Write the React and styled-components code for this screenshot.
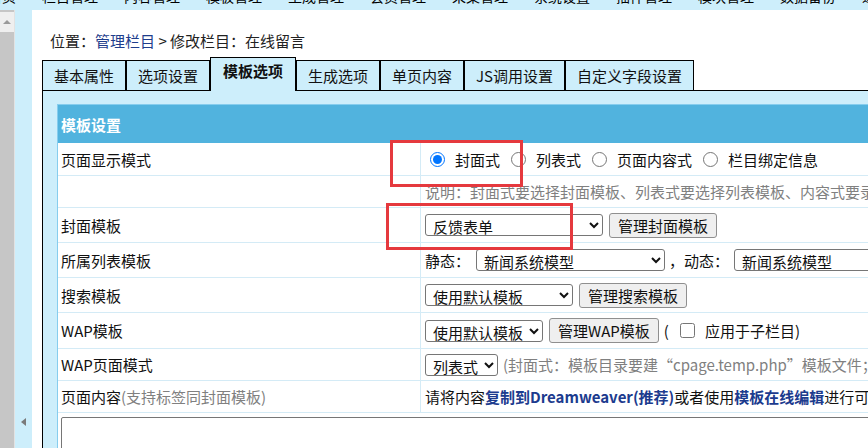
import React from 'react';
import styled, { createGlobalStyle } from 'styled-components';

const GlobalStyle = createGlobalStyle`
  html, body { margin: 0; padding: 0; overflow: hidden; background: #fff; }
  body {
    font-family: "Noto Sans CJK SC", "Microsoft YaHei", sans-serif;
    font-size: 15px;
    color: #111;
  }
  * { box-sizing: border-box; }
`;

const navItems = ['网站首页', '栏目管理', '内容管理', '模板管理', '生成管理', '会员管理', '采集管理', '系统设置', '插件管理', '模块管理', '数据备份', '退出系统'];

export default function App() {
  return (
    <Page>
      <GlobalStyle />
      <TopNav>
        <NavList>
          {navItems.map((t) => (
            <NavItem key={t}>{t}</NavItem>
          ))}
        </NavList>
      </TopNav>
      <Body>
        <ScrollTrack>
          <ScrollBtn>
            <UpArrow />
          </ScrollBtn>
        </ScrollTrack>
        <SideStrip>
          <LeftArrow />
        </SideStrip>
        <Main>
          <Location>
            位置：<Link>管理栏目</Link> &gt; 修改栏目：在线留言
          </Location>
          <Tabs>
            {['基本属性', '选项设置', '模板选项', '生成选项', '单页内容', 'JS调用设置', '自定义字段设置'].map((t) => (
              <Tab key={t} $active={t === '模板选项'}>{t}</Tab>
            ))}
          </Tabs>
          <Panel>
            <Table>
              <Header>模板设置</Header>
              <Row $h={33}>
                <Label>页面显示模式</Label>
                <Value>
                  <Option>
                    <Radio type="radio" name="mode" defaultChecked />封面式
                  </Option>
                  <Option>
                    <Radio type="radio" name="mode" />列表式
                  </Option>
                  <Option>
                    <Radio type="radio" name="mode" />页面内容式
                  </Option>
                  <Option>
                    <Radio type="radio" name="mode" />栏目绑定信息
                  </Option>
                </Value>
              </Row>
              <Row $h={32}>
                <Label />
                <Value>
                  <Note>说明：封面式要选择封面模板、列表式要选择列表模板、内容式要录入页面内容，栏目绑定信息要选择绑定的栏目</Note>
                </Value>
              </Row>
              <Row $h={35}>
                <Label>封面模板</Label>
                <Value>
                  <Select $w={178} defaultValue="a">
                    <option value="a">反馈表单</option>
                  </Select>
                  <Button>管理封面模板</Button>
                </Value>
              </Row>
              <Row $h={35}>
                <Label>所属列表模板</Label>
                <Value>
                  静态：
                  <Select $w={189} $ml={6}>
                    <option>新闻系统模型</option>
                  </Select>
                  <Sep>，动态：</Sep>
                  <Select $w={189}>
                    <option>新闻系统模型</option>
                  </Select>
                </Value>
              </Row>
              <Row $h={35}>
                <Label>搜索模板</Label>
                <Value>
                  <Select $w={148}>
                    <option>使用默认模板</option>
                  </Select>
                  <Button>管理搜索模板</Button>
                </Value>
              </Row>
              <Row $h={36}>
                <Label>WAP模板</Label>
                <Value>
                  <Select $w={118}>
                    <option>使用默认模板</option>
                  </Select>
                  <Button>管理WAP模板</Button>
                  <Paren>(</Paren>
                  <Check type="checkbox" />
                  应用于子栏目)
                </Value>
              </Row>
              <Row $h={32}>
                <Label>WAP页面模式</Label>
                <Value>
                  <Select $w={73}>
                    <option>列表式</option>
                  </Select>
                  <Note $ml={5}>(封面式：模板目录要建“cpage.temp.php”模板文件；页面内容式：模板目录要建“page.temp.php”模板文件)</Note>
                </Value>
              </Row>
              <Row $h={32}>
                <Label>
                  页面内容<Note>(支持标签同封面模板)</Note>
                </Label>
                <Value>
                  请将内容<Strong>复制到Dreamweaver(推荐)</Strong>或者使用<Strong>模板在线编辑</Strong>进行可视化编辑后再粘贴到这里
                </Value>
              </Row>
              <EditorRow>
                <Editor defaultValue="" />
              </EditorRow>
            </Table>
          </Panel>
        </Main>
      </Body>
      <Mark $x={390} $y={140} $w={133} $h={47} />
      <Mark $x={386} $y={203} $w={187} $h={47} />
    </Page>
  );
}

const Page = styled.div`
  position: relative;
  width: 868px;
  height: 448px;
  overflow: hidden;
`;

const TopNav = styled.div`
  height: 10px;
  background: #cdeefb;
  overflow: hidden;
`;

const NavList = styled.div`
  display: flex;
  gap: 26px;
  margin-left: -40px;
  white-space: nowrap;
`;

const NavItem = styled.span`
  font-size: 14px;
  line-height: 14px;
  margin-top: -11px;
  color: #000;
  flex-shrink: 0;
`;

const Body = styled.div`
  display: flex;
  height: 438px;
`;

const ScrollTrack = styled.div`
  width: 15px;
  flex-shrink: 0;
  background: #c6c6c6;
  border-right: 1px solid #e2e2e2;
`;

const ScrollBtn = styled.div`
  height: 20px;
  margin-top: 2px;
  background: #efefef;
  display: flex;
  align-items: center;
  justify-content: center;
`;

const UpArrow = styled.div`
  width: 0;
  height: 0;
  border-left: 4px solid transparent;
  border-right: 4px solid transparent;
  border-bottom: 4px solid #9a9a9a;
`;

const SideStrip = styled.div`
  width: 17px;
  flex-shrink: 0;
  background: #cdeefb;
  display: flex;
  flex-direction: column;
  justify-content: flex-end;
  align-items: center;
  padding-bottom: 22px;
`;

const LeftArrow = styled.div`
  width: 0;
  height: 0;
  border-top: 4px solid transparent;
  border-bottom: 4px solid transparent;
  border-right: 5px solid #7a7a7a;
`;

const Main = styled.div`
  flex-shrink: 0;
  width: 1200px;
  background: #fff;
  padding: 21px 0 0 10px;
`;

const Location = styled.div`
  height: 20px;
  line-height: 20px;
  padding-left: 8px;
  margin-bottom: 6px;
  color: #222;
`;

const Link = styled.span`
  color: #1e3d8c;
`;

const Tabs = styled.div`
  display: flex;
  align-items: flex-end;
  height: 33px;
`;

const Tab = styled.div`
  height: ${(p) => (p.$active ? '34px' : '30px')};
  margin-bottom: ${(p) => (p.$active ? '-1px' : '0')};
  padding: ${(p) => (p.$active ? '0 12px 8px' : '0 11px')};
  position: relative;
  z-index: ${(p) => (p.$active ? 1 : 0)};
  display: flex;
  align-items: center;
  background: #cdeefb;
  border: 1px solid #000;
  border-bottom: none;
  font-weight: ${(p) => (p.$active ? 700 : 400)};
  color: #111;
  white-space: nowrap;
`;

const Panel = styled.div`
  border-top: 1px solid #000;
  border-left: 1px solid #000;
  background: #cdeefb;
  padding: 13px 0 0 14px;
  height: 400px;
`;

const Table = styled.div`
  width: 1100px;
  border: 1px solid #86cdee;
  background: #fff;
`;

const Header = styled.div`
  height: 38px;
  background: #51b3de;
  color: #fff;
  font-weight: 700;
  padding-left: 3px;
  display: flex;
  align-items: center;
`;

const Row = styled.div`
  display: flex;
  height: ${(p) => p.$h}px;
  border-bottom: 1px solid #d4ebf6;
`;

const Label = styled.div`
  width: 363px;
  flex-shrink: 0;
  border-right: 1px solid #d4ebf6;
  padding-left: 3px;
  display: flex;
  align-items: center;
  white-space: nowrap;
`;

const Value = styled.div`
  flex: 1;
  padding-left: 4px;
  display: flex;
  align-items: center;
  white-space: nowrap;
`;

const Option = styled.label`
  display: flex;
  align-items: center;
  margin-right: 6px;
`;

const Radio = styled.input`
  width: 15px;
  height: 15px;
  margin: 0 10px 0 5px;
`;

const Check = styled.input`
  width: 15px;
  height: 15px;
  margin: 0 10px 0 11px;
`;

const Note = styled.span`
  color: #808080;
  margin-left: ${(p) => p.$ml || 0}px;
`;

const Select = styled.select`
  width: ${(p) => p.$w}px;
  height: 22px;
  margin-left: ${(p) => p.$ml || 0}px;
  padding: 0 0 0 3px;
  font-family: inherit;
  font-size: 15px;
  color: #111;
  background: #fff;
  border: 1px solid #767676;
  border-radius: 3px;
`;

const Button = styled.button`
  height: 25px;
  margin-left: 6px;
  padding: 0 8px;
  font-family: inherit;
  font-size: 15px;
  color: #111;
  background: #efefef;
  border: 1px solid #8f8f8f;
  border-radius: 3px;
`;

const Sep = styled.span`
  margin: 0 5px 0 4px;
`;

const Paren = styled.span`
  margin-left: 5px;
`;

const Strong = styled.b`
  color: #1c3b8e;
  font-weight: 700;
`;

const EditorRow = styled.div`
  padding: 4px 0 0 3px;
  height: 80px;
`;

const Editor = styled.textarea`
  display: block;
  width: 1080px;
  height: 70px;
  border: 1px solid #767676;
  border-radius: 2px;
  resize: none;
  font-family: inherit;
`;

const Mark = styled.div`
  position: absolute;
  left: ${(p) => p.$x}px;
  top: ${(p) => p.$y}px;
  width: ${(p) => p.$w}px;
  height: ${(p) => p.$h}px;
  border: 3px solid #e5393e;
  pointer-events: none;
`;
